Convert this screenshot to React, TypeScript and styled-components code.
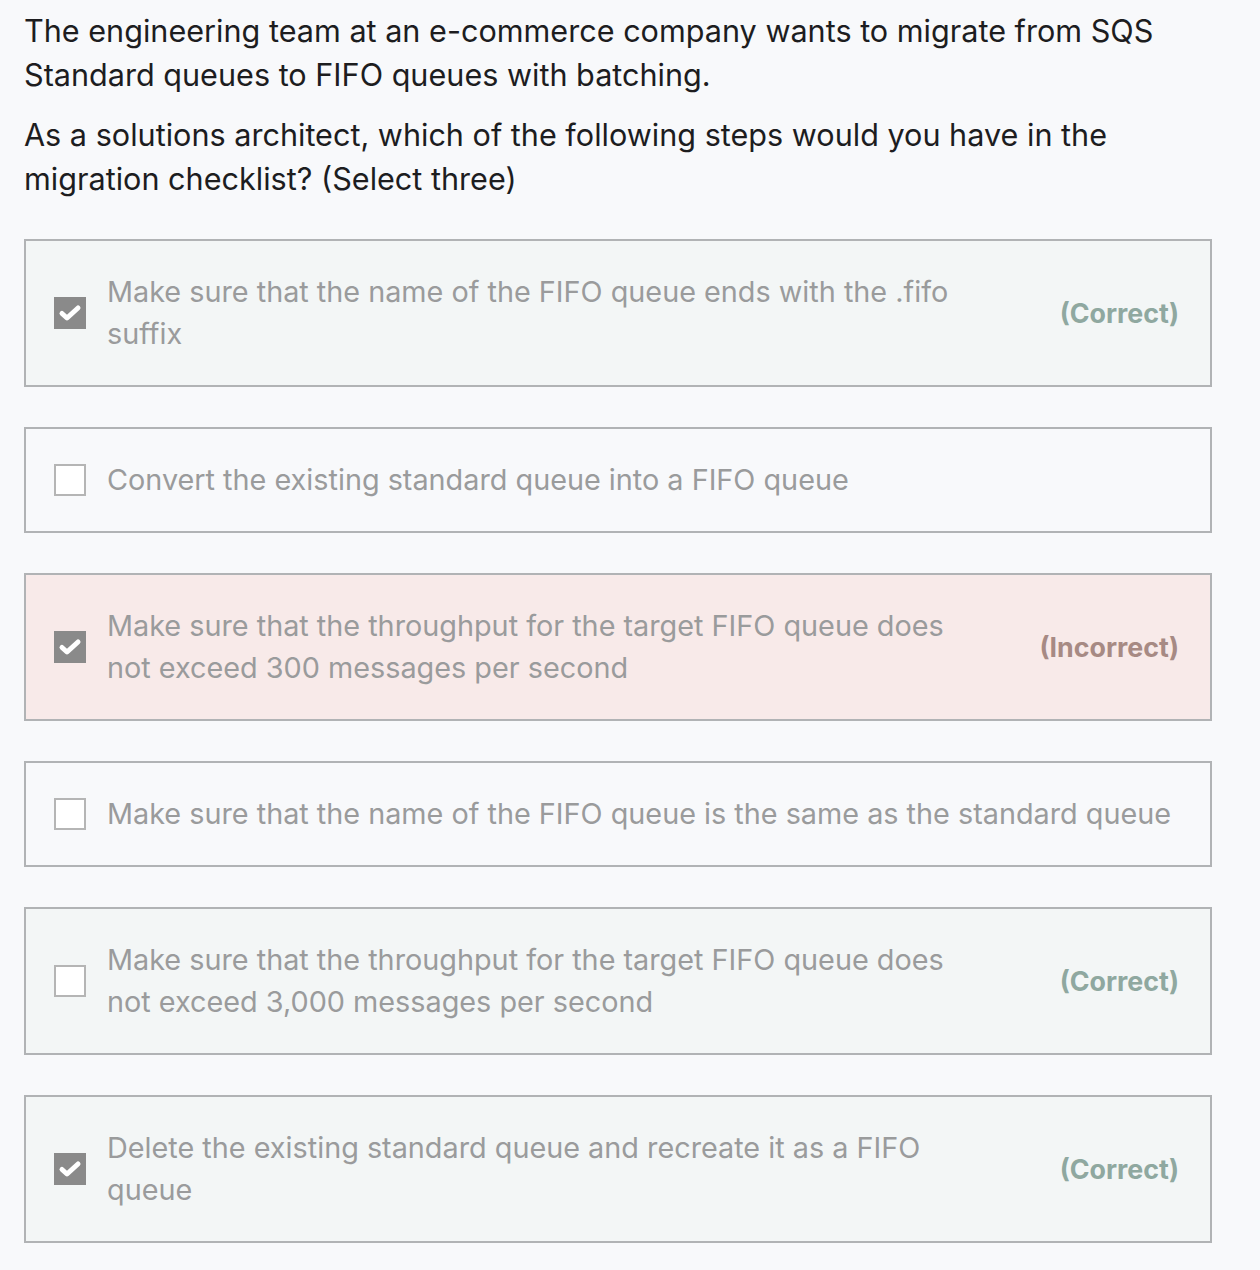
import React from 'react'
import styled, { createGlobalStyle } from 'styled-components'

const GlobalStyle = createGlobalStyle`
  html, body {
    margin: 0;
    padding: 0;
    background: #f8f9fb;
  }
  body {
    font-family: Inter, "Noto Sans", sans-serif;
    -webkit-font-smoothing: antialiased;
  }
`

const Page = styled.div`
  padding: 9px 48px 24px 24px;
`

const Question = styled.p`
  margin: 0 0 16px;
  font-size: 30.6px;
  line-height: 44px;
  color: #1d1d1f;
`

const List = styled.div`
  margin-top: 38px;
  display: flex;
  flex-direction: column;
  gap: 40px;
`

type Status = 'correct' | 'incorrect' | 'none'

const bg: Record<Status, string> = {
  correct: '#f3f6f6',
  incorrect: '#f8eae9',
  none: '#f8f9fb',
}

const Card = styled.div<{ $status: Status }>`
  display: flex;
  align-items: center;
  min-height: 101px;
  box-sizing: border-box;
  padding: 30px 31px 30px 28px;
  border: 2px solid #b1b3b5;
  background: ${(p) => bg[p.$status]};
`

const Box = styled.span<{ $checked: boolean }>`
  flex: none;
  width: 32px;
  height: 32px;
  box-sizing: border-box;
  display: flex;
  align-items: center;
  justify-content: center;
  background: ${(p) => (p.$checked ? '#8a8a8a' : '#ffffff')};
  border: ${(p) => (p.$checked ? 'none' : '2px solid #b5b5b5')};
  margin-right: 21px;
`

const Text = styled.div`
  flex: 1;
  font-size: 28.8px;
  line-height: 42px;
  color: #9a9b9c;
`

const Verdict = styled.div<{ $status: Status }>`
  flex: none;
  margin-left: 75px;
  font-size: 26.8px;
  font-weight: 700;
  color: ${(p) => (p.$status === 'incorrect' ? '#a78a84' : '#8fa8a0')};
`

const Check = () => (
  <svg width="24" height="20" viewBox="0 0 24 20">
    <path
      d="M4 10.5 L9 15 L20 5"
      fill="none"
      stroke="#ffffff"
      strokeWidth="5"
      strokeLinecap="round"
      strokeLinejoin="round"
    />
  </svg>
)

const options: { text: string; checked: boolean; status: Status }[] = [
  {
    text: 'Make sure that the name of the FIFO queue ends with the .fifo suffix',
    checked: true,
    status: 'correct',
  },
  {
    text: 'Convert the existing standard queue into a FIFO queue',
    checked: false,
    status: 'none',
  },
  {
    text: 'Make sure that the throughput for the target FIFO queue does not exceed 300 messages per second',
    checked: true,
    status: 'incorrect',
  },
  {
    text: 'Make sure that the name of the FIFO queue is the same as the standard queue',
    checked: false,
    status: 'none',
  },
  {
    text: 'Make sure that the throughput for the target FIFO queue does not exceed 3,000 messages per second',
    checked: false,
    status: 'correct',
  },
  {
    text: 'Delete the existing standard queue and recreate it as a FIFO queue',
    checked: true,
    status: 'correct',
  },
]

export default function App() {
  return (
    <Page>
      <GlobalStyle />
      <Question>
        The engineering team at an e-commerce company wants to migrate from SQS
        Standard queues to FIFO queues with batching.
      </Question>
      <Question>
        As a solutions architect, which of the following steps would you have in
        the migration checklist? (Select three)
      </Question>
      <List>
        {options.map((o) => (
          <Card key={o.text} $status={o.status}>
            <Box $checked={o.checked}>{o.checked && <Check />}</Box>
            <Text>{o.text}</Text>
            {o.status !== 'none' && (
              <Verdict $status={o.status}>
                {o.status === 'correct' ? '(Correct)' : '(Incorrect)'}
              </Verdict>
            )}
          </Card>
        ))}
      </List>
    </Page>
  )
}
